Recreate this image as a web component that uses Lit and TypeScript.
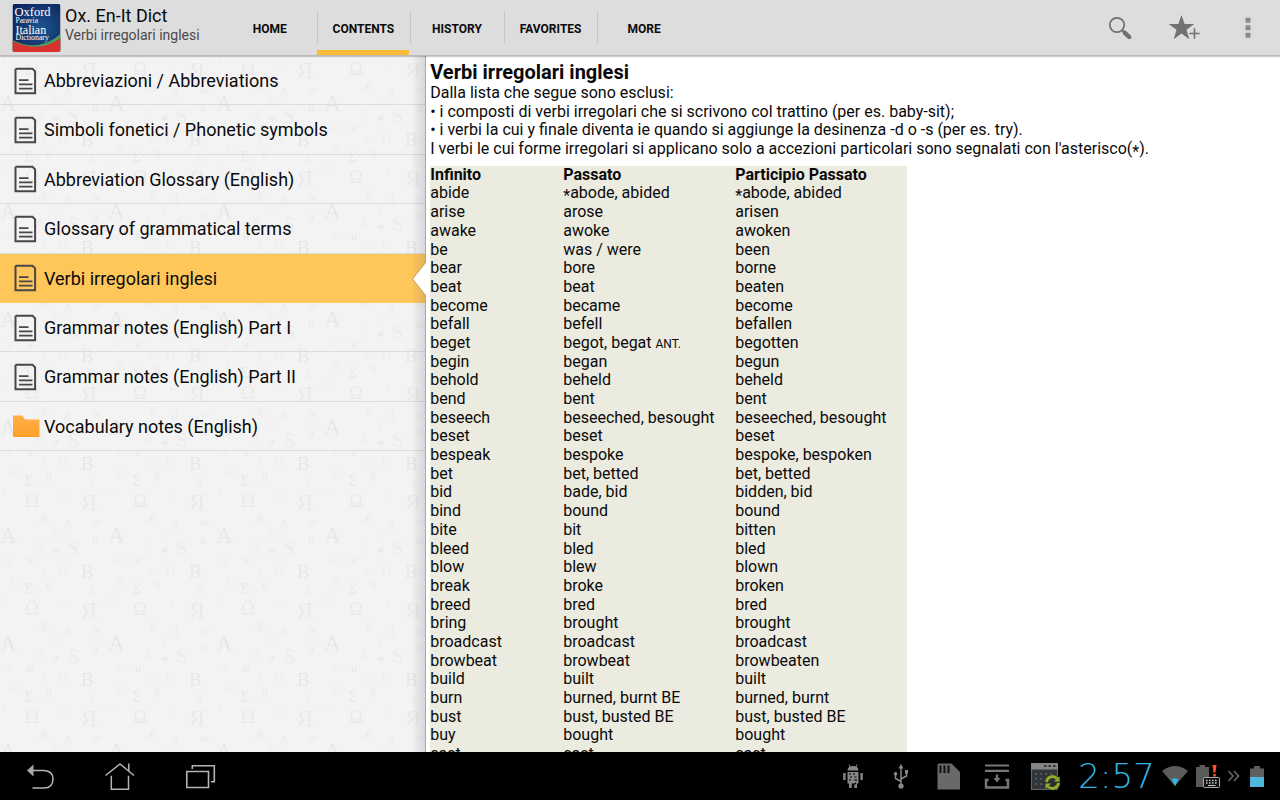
import { LitElement, html, css, svg, nothing } from "lit";
import { customElement, state } from "lit/decorators.js";

interface Entry { label: string; kind: "page" | "folder"; }

const TABS = ["HOME", "CONTENTS", "HISTORY", "FAVORITES", "MORE"];

const ENTRIES: Entry[] = [
  { label: "Abbreviazioni / Abbreviations", kind: "page" },
  { label: "Simboli fonetici / Phonetic symbols", kind: "page" },
  { label: "Abbreviation Glossary (English)", kind: "page" },
  { label: "Glossary of grammatical terms", kind: "page" },
  { label: "Verbi irregolari inglesi", kind: "page" },
  { label: "Grammar notes (English) Part I", kind: "page" },
  { label: "Grammar notes (English) Part II", kind: "page" },
  { label: "Vocabulary notes (English)", kind: "folder" },
];

const VERBS: [string, string, string][] = [
  ["abide", "*abode, abided", "*abode, abided"],
  ["arise", "arose", "arisen"],
  ["awake", "awoke", "awoken"],
  ["be", "was / were", "been"],
  ["bear", "bore", "borne"],
  ["beat", "beat", "beaten"],
  ["become", "became", "become"],
  ["befall", "befell", "befallen"],
  ["beget", "begot, begat ANT.", "begotten"],
  ["begin", "began", "begun"],
  ["behold", "beheld", "beheld"],
  ["bend", "bent", "bent"],
  ["beseech", "beseeched, besought", "beseeched, besought"],
  ["beset", "beset", "beset"],
  ["bespeak", "bespoke", "bespoke, bespoken"],
  ["bet", "bet, betted", "bet, betted"],
  ["bid", "bade, bid", "bidden, bid"],
  ["bind", "bound", "bound"],
  ["bite", "bit", "bitten"],
  ["bleed", "bled", "bled"],
  ["blow", "blew", "blown"],
  ["break", "broke", "broken"],
  ["breed", "bred", "bred"],
  ["bring", "brought", "brought"],
  ["broadcast", "broadcast", "broadcast"],
  ["browbeat", "browbeat", "browbeaten"],
  ["build", "built", "built"],
  ["burn", "burned, burnt BE", "burned, burnt"],
  ["bust", "bust, busted BE", "bust, busted BE"],
  ["buy", "bought", "bought"],
  ["cast", "cast", "cast"],
];

const pageIcon = svg`<svg class="entry-icon" viewBox="0 0 28 30" aria-hidden="true">
  <path d="M4 2.8H21L23.6 5.4V27.2H4V2.8" transform="translate(-0.5 0)" fill="none" stroke="#4a4648" stroke-width="2"/>
  <path d="M7 14.2H16.5M7 18.4H20.5M7 22.6H20.5" fill="none" stroke="#4a4648" stroke-width="1.8"/></svg>`;

const folderIcon = svg`<svg class="entry-icon" viewBox="0 0 28 30" aria-hidden="true">
  <defs><linearGradient id="fold" x2="0" y2="1"><stop stop-color="#ffb04a"/><stop offset="1" stop-color="#ff9f2a"/></linearGradient></defs>
  <path d="M1 4.5H10.5L13 8.5H27.5V26H1Z" fill="url(#fold)"/></svg>`;

/** Faint repeating letters behind the list. */
const GLYPHS: [string, number, number, number, number][] = [
  ["A", 0, 93, 23, 0.05], ["B", 81, 20, 19, 0.05], ["Ω", 25, 57, 19, 0.04],
  ["Я", 81, 60, 24, 0.035], ["Σ", 24, 36, 16, 0.04], ["S", 68, 105, 20, 0.03],
  ["O", 58, 16, 12, 0.03], ["a", 41, 16, 10, 0.03], ["ü", 46, 31, 12, 0.04],
  ["K", 9, 27, 11, 0.025], ["χ", 89, 34, 12, 0.03], ["Æ", 38, 73, 12, 0.035],
  ["д", 64, 76, 12, 0.035], ["w", 92, 76, 13, 0.03], ["u", 92, 94, 13, 0.04],
  ["*", 53, 108, 15, 0.05], ["д", 36, 100, 14, 0.025], ["τ", 53, 87, 12, 0.02],
  ["й", 27, 6, 12, 0.04], ["я", 7, 6, 12, 0.02], ["e", 62, 49, 9, 0.025], ["v", 1, 46, 10, 0.025],
];

const backdrop = svg`<svg class="backdrop" width="100%" height="100%" aria-hidden="true">
  <defs><pattern id="letters" width="108" height="108" y="70" patternUnits="userSpaceOnUse">
    ${GLYPHS.map(([c, x, y, s, o]) => svg`<text x=${x} y=${y} font-size=${s} fill-opacity=${o}>${c}</text>`)}
  </pattern></defs>
  <rect width="100%" height="100%" fill="url(#letters)"/></svg>`;

const logo = svg`<svg class="logo" viewBox="0 0 48 48" role="img" aria-label="Oxford Paravia Italian Dictionary">
  <defs><radialGradient id="blue" cx="0.6" cy="0.5" r="0.75"><stop stop-color="#1d5591"/><stop offset="1" stop-color="#0b1f55"/></radialGradient>
  <clipPath id="round"><rect width="48" height="48" rx="2"/></clipPath></defs>
  <g clip-path="url(#round)">
    <rect width="48" height="48" fill="url(#blue)"/>
    <path d="M0 36Q26 49 48 30V48H0Z" fill="#4f9a5a"/>
    <path d="M0 37Q27 50 48 34V48H0Z" fill="#d8312f"/>
    <g fill="#fff">
      <text x="2" y="12" font-size="12.5">Oxford</text>
      <text x="3" y="19" font-size="7.5">Paravia</text>
      <text x="3" y="29.5" font-size="12">Italian</text>
      <text x="3" y="36" font-size="7.8">Dictionary</text>
    </g>
  </g></svg>`;

@customElement("app-root")
export class AppRoot extends LitElement {
  static styles = css`
    :host {
      display: flex;
      flex-direction: column;
      height: 100vh;
      overflow: hidden;
      background: #fff;
      color: #0a0a0a;
      font-family: Roboto, "Liberation Sans", sans-serif;
    }
    * { box-sizing: border-box; }
    button, a { font: inherit; color: inherit; text-decoration: none; }
    button { border: 0; background: none; padding: 0; cursor: pointer; }
    svg { display: block; }

    .bar {
      display: flex;
      align-items: stretch;
      height: 56px;
      flex: none;
      background: #dddddd;
      border-bottom: 1px solid #bcbcbc;
      box-shadow: 0 1px 1px rgba(0, 0, 0, 0.2);
      position: relative;
      z-index: 2;
    }
    .brand { display: flex; width: 223px; padding: 4px 0 0 12px; gap: 4px; flex: none; }
    .logo { width: 49px; height: 48px; font-family: "Liberation Serif", serif; }
    .app-name { font-size: 18px; line-height: 24px; margin: 0; font-weight: 400; white-space: nowrap; }
    .app-sub { font-size: 14px; line-height: 14px; margin: 0; color: #4a4a4a; white-space: nowrap; }
    .tabs { display: grid; grid-template-columns: repeat(5, 1fr); width: 468px; flex: none; }
    .tab {
      display: flex;
      position: relative;
      align-items: center;
      justify-content: center;
      font-size: 12px;
      line-height: 16px;
      font-weight: 700;
      padding-top: 2px;
    }
    .tab + .tab::before {
      content: "";
      position: absolute;
      left: 0;
      top: 11px;
      bottom: 11px;
      width: 1px;
      background: #c8c8c8;
    }
    .tab.on::after {
      content: "";
      position: absolute;
      left: 0;
      right: 1px;
      bottom: 0;
      height: 5px;
      background: #fdbc38;
    }
    .actions { display: flex; margin-left: auto; }
    .action { width: 64px; display: grid; place-items: center; }
    .action svg { width: 40px; height: 40px; }

    .main { display: flex; flex: 1; min-height: 0; }
    .side {
      position: relative;
      width: 33.3%;
      flex: none;
      background: #f3f3f3;
      border-right: 1px solid #a9a9a9;
    }
    .backdrop { position: absolute; inset: 0; font-family: "Liberation Serif", serif; }
    .side::after {
      content: "";
      position: absolute;
      inset: 0 0 0 auto;
      width: 14px;
      background: linear-gradient(to right, transparent, rgba(70, 70, 90, 0.16));
      pointer-events: none;
    }
    .list { position: relative; list-style: none; margin: 0; padding: 0; }
    .entry {
      display: flex;
      align-items: center;
      gap: 4px;
      width: 100%;
      padding: 13px 12px 12px;
      border-bottom: 1px solid #dcdcdc;
      font-size: 18px;
      line-height: 1.3;
      text-align: left;
    }
    .entry-icon { width: 28px; height: 30px; margin: -4px 0; flex: none; }
    .entry.on { background: #ffc65a; border-color: #ffc65a; }
    .item { position: relative; }
    .pointer { position: absolute; z-index: 1; right: -1px; top: 8px; width: 14px; height: 34px; }

    .article { flex: 1; min-width: 0; overflow: hidden; padding: 4px 4px 0; font-size: 16px; line-height: 1.168; }
    .heading { font-size: 20px; line-height: 24px; margin: 0; font-weight: 700; }
    .para { margin: 0; }
    .verbs { margin-top: 7px; border-collapse: collapse; table-layout: fixed; width: 477px; background: #ecebe0; }
    .verbs th, .verbs td { padding: 0; text-align: left; white-space: nowrap; }
    .c1 { width: 133px; }
    .star { font-size: 16px; line-height: 1px; vertical-align: -3px; }
    .abbr { font-size: 12px; line-height: 1px; }

    .system { display: flex; align-items: center; flex: none; height: 48px; background: #000; padding: 0 14px 0 0; }
    .key { width: 80px; height: 48px; display: grid; place-items: center; }
    .key svg { width: 32px; height: 32px; margin-top: -2px; }
    .tray { display: flex; align-items: center; margin-left: auto; }
    .notes { display: flex; gap: 16px; margin-right: 14px; }
    .notes svg { width: 32px; height: 32px; }
    .clock { font-family: "DejaVu Sans", sans-serif; font-weight: 200; font-size: 34px; line-height: 48px; color: #33b5e5; width: 83px; text-align: center; }
    .status { display: flex; align-items: center; gap: 6px; margin-left: 3px; }
  `;

  @state() private selected = 4;
  @state() private tab = 1;

  private cell(text: string) {
    return text.split(/(\*|ANT\.)/).map((part) =>
      part === "*" ? html`<span class="star">*</span>`
        : part === "ANT." ? html`<span class="abbr">ANT.</span>` : part);
  }

  private header() {
    return html`<header class="bar">
      <div class="brand">${logo}
        <div><h1 class="app-name">Ox. En-It Dict</h1><p class="app-sub">Verbi irregolari inglesi</p></div>
      </div>
      <nav class="tabs">
        ${TABS.map((t, i) => html`<a href="#" class="tab ${i === this.tab ? "on" : ""}"
          @click=${(e: Event) => { e.preventDefault(); this.tab = i; }}>${t}</a>`)}
      </nav>
      <div class="actions">
        <button class="action" aria-label="Search"><svg viewBox="0 0 40 40">
          <circle cx="17" cy="17" r="7.2" fill="none" stroke="#6f6f6f" stroke-width="1.7"/>
          <path d="M22 22L24.5 24.5" stroke="#6f6f6f" stroke-width="2"/>
          <path d="M24.8 24.8L29.2 29" stroke="#6f6f6f" stroke-width="4.4" stroke-linecap="round"/></svg></button>
        <button class="action" aria-label="Add to favorites"><svg viewBox="0 0 40 40">
          <path d="M17.5 7L20.6 16.1H30.2L22.5 21.8L25.3 31.2L17.5 25.6L9.7 31.2L12.5 21.8L4.6 16.1H14.3Z" fill="#727272"/>
          <path d="M30.5 19V31M24.5 25.5H36" stroke="#ddd" stroke-width="4"/>
          <path d="M30.5 20.3V30.7M25.3 25.5H35.7" stroke="#727272" stroke-width="1.6"/></svg></button>
        <button class="action" aria-label="More options"><svg viewBox="0 0 40 40">
          <path d="M17.5 9.7H22.5V14.7H17.5ZM17.5 17.3H22.5V22.3H17.5ZM17.5 24.7H22.5V29.7H17.5Z" fill="#8a8a8a"/></svg></button>
      </div>
    </header>`;
  }

  private sidebar() {
    return html`<aside class="side">${backdrop}
      <ul class="list">
        ${ENTRIES.map((e, i) => html`<li class="item">
          <button class="entry ${i === this.selected ? "on" : ""}" @click=${() => { this.selected = i; }}>
            ${e.kind === "page" ? pageIcon : folderIcon}<span>${e.label}</span>
          </button>
          ${i === this.selected ? svg`<svg class="pointer" viewBox="0 0 14 34" aria-hidden="true">
            <path d="M14 0L0.5 17L14 34Z" fill="#fff"/>
            <path d="M14 0L0.5 17L14 34" fill="none" stroke="#c49a4c" stroke-width="1"/></svg>` : nothing}
        </li>`)}
      </ul>
    </aside>`;
  }

  private article() {
    return html`<main class="article">
      <h2 class="heading">Verbi irregolari inglesi</h2>
      <p class="para">Dalla lista che segue sono esclusi:</p>
      <p class="para">• i composti di verbi irregolari che si scrivono col trattino (per es. baby-sit);</p>
      <p class="para">• i verbi la cui y finale diventa ie quando si aggiunge la desinenza -d o -s (per es. try).</p>
      <p class="para">${this.cell("I verbi le cui forme irregolari si applicano solo a accezioni particolari sono segnalati con l'asterisco(*).")}</p>
      <table class="verbs">
        <colgroup><col class="c1"><col><col></colgroup>
        <thead><tr><th>Infinito</th><th>Passato</th><th>Participio Passato</th></tr></thead>
        <tbody>${VERBS.map((row) => html`<tr>${row.map((c) => html`<td>${this.cell(c)}</td>`)}</tr>`)}</tbody>
      </table>
    </main>`;
  }

  private system() {
    return html`<footer class="system">
      <button class="key" aria-label="Back"><svg viewBox="0 0 32 32">
        <path d="M3 11.5L9.5 5.5V17.5Z" fill="#aaa"/>
        <path d="M9 11.5H20Q29 12 29 20Q29 29 20 29H8.5" fill="none" stroke="#b4b4b4" stroke-width="1.5"/></svg></button>
      <button class="key" aria-label="Home"><svg viewBox="0 0 32 32">
        <path d="M1.5 16.5L16 5L30 16.5M24.8 11.8V4.5M7.3 16.8V30.2H24.5V16.8" fill="none" stroke="#b4b4b4" stroke-width="1.5"/></svg></button>
      <button class="key" aria-label="Recent apps"><svg viewBox="0 0 32 32">
        <path d="M2.8 12.5H24.5V28.5H2.8ZM8.3 10V6.8H30.3V22.7H27" fill="none" stroke="#b4b4b4" stroke-width="1.6"/></svg></button>
      <div class="tray">
        <div class="notes">
          <svg viewBox="0 0 32 32" aria-hidden="true">
            <path d="M10.5 10.5Q10.5 6 16 6Q21.5 6 21.5 10.5Z" fill="#858585"/>
            <path d="M12 4.5L13 7M20 4.5L19 7" stroke="#858585"/>
            <path d="M10.5 12H21.5V23.5H10.5ZM6.2 13H8.6V20H6.2ZM23.4 13H25.8V20H23.4ZM12 23H14.8V28H12ZM17.2 23H20V28H17.2Z" fill="#858585"/>
            <path d="M12 14H14M16 14H18M13 17H15M17.5 17H19.5M12 20H14M17 20H20M19 23L15 26" stroke="#000" stroke-width="1.2"/></svg>
          <svg viewBox="0 0 32 32" aria-hidden="true">
            <path d="M16 7V25M16 21.5L10.5 18.5V14M16 19L21.5 16V12.5" fill="none" stroke="#8a8a8a" stroke-width="1.5"/>
            <path d="M16 4L18.5 8.5H13.5ZM20 10H23V13.5H20Z" fill="#8a8a8a"/>
            <circle cx="10.5" cy="13.7" r="1.8" fill="#8a8a8a"/><circle cx="16" cy="26" r="2.6" fill="#8a8a8a"/></svg>
          <svg viewBox="0 0 32 32" aria-hidden="true">
            <path d="M4.5 5Q4.5 3.5 6 3.5H18.5L27 12V29.5H4.5Z" fill="#696969"/>
            <path d="M7.5 5.5V13M11.5 5.5V13M15.5 5.5V13" stroke="#111" stroke-width="2"/></svg>
          <svg viewBox="0 0 32 32" aria-hidden="true">
            <path d="M4 5.5H28M4 10.8H28" stroke="#777" stroke-width="2.2"/>
            <path d="M7.5 20H5V27.5H27V20H24.5" fill="none" stroke="#777" stroke-width="2.4"/>
            <path d="M16 14.5V19" stroke="#777" stroke-width="2.4"/><path d="M12.5 18H19.5L16 22.5Z" fill="#777"/></svg>
          <svg viewBox="0 0 32 32" aria-hidden="true">
            <rect x="2.5" y="3.5" width="26" height="26" fill="#30353a" stroke="#666"/>
            <path d="M2 3H29V9.5H2Z" fill="#858585"/>
            <path d="M15 6H17.5M19.5 6H22M24 6H26.5" stroke="#333" stroke-width="2"/>
            <path d="M6 14H25M6 19H16M6 24H14" stroke="#555" stroke-width="2" stroke-dasharray="2 3"/>
            <circle cx="23.5" cy="22.5" r="8" fill="#2d3030"/>
            <path d="M17.5 22A6 6 0 0 1 28 18.6M29.5 23A6 6 0 0 1 19 26.4" fill="none" stroke="#8fae2b" stroke-width="2.8"/>
            <path d="M30.5 16V21.5H25ZM16.5 29V23.5H22Z" fill="#8fae2b"/></svg>
        </div>
        <time class="clock">2:57</time>
        <div class="status">
          <svg width="28" height="24" viewBox="0 0 28 24" aria-hidden="true">
            <path d="M1 7Q14 -3 27 7L14 22Z" fill="#5c5c5c"/><path d="M10.5 15.5Q14 13 17.5 15.5L14 22Z" fill="#33b5e5"/></svg>
          <svg width="26" height="26" viewBox="0 0 26 26" aria-hidden="true">
            <path d="M1 4H4.5V2H10V4H14V24H1Z" fill="#5a5a5a"/>
            <path d="M17.5 2H21.5L20.5 9.5H18.5ZM18.2 11H20.8V13.5H18.2Z" fill="#ff5021"/>
            <rect x="8.5" y="14.5" width="16" height="10" rx="1" fill="#111" stroke="#a9a9a9"/>
            <path d="M11 17.5H23M11 20H23" stroke="#ccc" stroke-width="1.3" stroke-dasharray="1.5 1.5"/><path d="M13 22.5H20.5" stroke="#ccc"/></svg>
          <svg width="13" height="14" viewBox="0 0 13 14" aria-hidden="true">
            <path d="M1.5 2L6 7L1.5 12M7 2L11.5 7L7 12" fill="none" stroke="#6b6b6b" stroke-width="1.5"/></svg>
          <svg width="20" height="24" viewBox="4 0 20 24" aria-hidden="true">
            <path d="M8 4.5H12V2H18V4.5H22V13H8Z" fill="#5e5e5e"/><path d="M8 13H22V23H8Z" fill="#4fb6dd"/></svg>
        </div>
      </div>
    </footer>`;
  }

  render() {
    return html`${this.header()}<div class="main">${this.sidebar()}${this.article()}</div>${this.system()}`;
  }
}
